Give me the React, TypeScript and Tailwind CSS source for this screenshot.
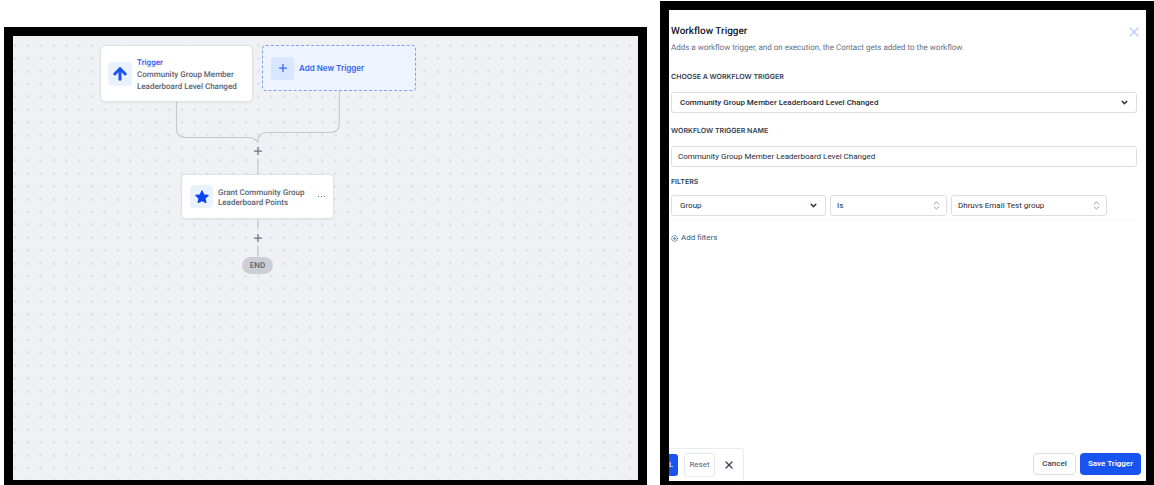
import { ArrowUp, ChevronDown, ChevronsUpDown, CirclePlus, Plus, X } from "lucide-react";
import type { ReactNode } from "react";

const FIELD =
  "block h-[21px] w-full appearance-none rounded-[3px] border border-[#dcdee3] bg-white text-[8px] text-[#1f2937] outline-none";

const SectionLabel = ({ children, htmlFor }: { children: ReactNode; htmlFor?: string }) => (
  <label htmlFor={htmlFor} className="block font-['Inter',sans-serif] text-[7px] leading-[10px] font-semibold text-[#344054]">
    {children}
  </label>
);

type SelectProps = { id?: string; label?: string; value: string; className: string; sort?: boolean };

const Select = ({ id, label, value, className, sort }: SelectProps) => (
  <div className="relative">
    <select id={id} aria-label={label} defaultValue={value} className={`${FIELD} ${className}`}>
      <option>{value}</option>
    </select>
    {sort ? (
      <ChevronsUpDown className="pointer-events-none absolute top-[5px] right-[5px] size-[11px] text-[#8b919c]" strokeWidth={2} />
    ) : (
      <ChevronDown className="pointer-events-none absolute top-[6px] right-[8px] size-[9px] text-[#344054]" strokeWidth={4} />
    )}
  </div>
);

const Connectors = () => (
  <svg className="absolute inset-0 size-full" aria-hidden="true">
    <defs>
      <pattern id="dots" x="-4.1" y="3.2" width="12.8" height="12.8" patternUnits="userSpaceOnUse">
        <circle cx="6.4" cy="6.4" r="1.4" fill="#e0e0e3" />
      </pattern>
    </defs>
    <rect width="100%" height="100%" fill="url(#dots)" />
    <g fill="none" stroke="#c6c8cc" strokeWidth="1.2">
      <path d="M163.5 65V92.5Q163.5 101.5 172.5 101.5H235Q242 101.5 244.8 106.5" />
      <path d="M326.3 55V87.5Q326.3 96.5 317.3 96.5H254Q244.8 96.5 244.8 106.5" />
      <path d="M244.8 122.5V138M244.8 183V193.5M244.8 209.5V221" />
    </g>
  </svg>
);

const AddStep = ({ className }: { className: string }) => (
  <button aria-label="Add step" className={`absolute left-[239px] flex size-[12px] items-center justify-center text-[#667085] ${className}`}>
    <Plus className="size-[12px]" strokeWidth={2.5} />
  </button>
);

const WorkflowCanvas = () => (
  <section className="relative mt-[27px] overflow-hidden border-[9px] border-b-[5px] border-black bg-[#f0f1f5]">
    <Connectors />

    <div className="absolute top-[9px] left-[87px] flex h-[57px] w-[153px] items-center gap-[5px] rounded-[5px] border border-[#dfe1e5] bg-white pl-[7px] shadow-xs">
      <span className="flex size-[24px] shrink-0 items-center justify-center rounded-[4px] bg-[#eaf1ff]">
        <ArrowUp className="size-[18px] text-[#1a54f0]" strokeWidth={4} />
      </span>
      <div className="pt-[2px] text-[8px] leading-[12px] font-medium whitespace-nowrap text-[#596273]">
        <div className="font-semibold text-[#3563f5]">Trigger</div>
        <div>Community Group Member</div>
        <div>Leaderboard Level Changed</div>
      </div>
    </div>

    <button className="absolute top-[9px] left-[249px] flex h-[46px] w-[154px] items-center gap-[5px] rounded-[4px] border border-dashed border-[#7ea0fa] bg-[#edf3ff] pl-[8px] font-['Inter',sans-serif] text-[8px] font-semibold whitespace-nowrap text-[#3563f5]">
      <span className="flex size-[23px] shrink-0 items-center justify-center rounded-[3px] bg-[#d8e6ff]">
        <Plus className="size-[12px]" strokeWidth={2.5} />
      </span>
      Add New Trigger
    </button>

    <AddStep className="top-[109px]" />

    <div className="absolute top-[138px] left-[168px] flex h-[45px] w-[153px] items-center gap-[5px] rounded-[4px] border border-[#dfe1e5] bg-white px-[8px] shadow-xs">
      <span className="flex size-[23px] shrink-0 items-center justify-center rounded-[4px] bg-[#eaf1ff]">
        <svg viewBox="0 0 24 24" className="size-[16px] text-[#0b46f0]" fill="currentColor" stroke="currentColor" strokeWidth="2" strokeLinejoin="round">
          <path d="M12 3l2.7 5.9 6.3.7-4.7 4.3 1.4 6.4L12 17l-5.7 3.3 1.4-6.4L3 9.6l6.3-.7z" />
        </svg>
      </span>
      <div className="flex-1 pt-[2px] text-[8px] leading-[10px] font-medium whitespace-nowrap text-[#596273]">
        <div>Grant Community Group</div>
        <div>Leaderboard Points</div>
      </div>
      <button aria-label="Step options" className="flex gap-[2px]">
        <i className="size-[1px] bg-[#667085]" />
        <i className="size-[1px] bg-[#667085]" />
        <i className="size-[1px] bg-[#667085]" />
      </button>
    </div>

    <AddStep className="top-[196px]" />

    <div className="absolute top-[221px] left-[229px] flex h-[17px] w-[31px] items-center justify-center rounded-full bg-[#cbcfd5] text-[8px] font-medium text-[#596273]">
      END
    </div>
  </section>
);

const TriggerPanel = () => (
  <section className="mt-px flex flex-col border-t-[9px] border-r-[8px] border-b-[4px] border-l-[9px] border-black bg-white">
    <div className="pt-[15px] pr-[9px] pl-[2px]">
      <header className="-mr-[5px] flex h-[14px] items-center justify-between">
        <h1 className="text-[10px] leading-[16px] font-medium text-[#101828]">Workflow Trigger</h1>
        <button aria-label="Close" className="text-[#b9cdfd]">
          <X className="size-[16px]" strokeWidth={2} />
        </button>
      </header>
      <p className="mt-[3px] text-[8px] leading-[12px] text-[#667085]">
        Adds a workflow trigger, and on execution, the Contact gets added to the workflow.
      </p>

      <div className="mt-[18px]">
        <SectionLabel htmlFor="trigger">CHOOSE A WORKFLOW TRIGGER</SectionLabel>
        <div className="mt-[10px]">
          <Select id="trigger" value="Community Group Member Leaderboard Level Changed" className="pl-[8px] font-medium" />
        </div>
      </div>

      <div className="mt-[13px]">
        <SectionLabel htmlFor="name">WORKFLOW TRIGGER NAME</SectionLabel>
        <input
          id="name"
          defaultValue="Community Group Member Leaderboard Level Changed"
          className={`${FIELD} mt-[10px] pl-[6px]`}
        />
      </div>

      <div className="mt-[10px]">
        <SectionLabel htmlFor="filter-field">FILTERS</SectionLabel>
        <div className="mt-[8px] grid grid-cols-[155fr_117fr_156fr] gap-[4px] border-b border-[#f5f6f7] pr-[30px] pb-[4px]">
          <Select id="filter-field" value="Group" className="pl-[8px]" />
          <Select label="Operator" value="Is" className="pl-[6px]" sort />
          <Select label="Group value" value="Dhruvs Email Test group" className="pl-[6px]" sort />
        </div>
      </div>

      <button className="mt-[11px] flex items-center gap-[3px] text-[8px] leading-[12px] text-[#2c5b80]">
        <CirclePlus className="size-[7px]" strokeWidth={2} />
        Add filters
      </button>
    </div>

    <footer className="mt-auto flex items-end justify-between pr-[5px]">
      <div className="flex h-[33px] w-[75px] items-center rounded-tr-[3px] border-t border-r border-[#eaecf0] text-[8px]">
        <button className="flex h-[22px] w-[9px] items-center overflow-hidden rounded-r-[3px] bg-[#1a54f0] text-white">L</button>
        <button className="ml-[6px] h-[24px] w-[31px] rounded-[3px] border border-[#e4e7ec] text-[#596273]">Reset</button>
        <button aria-label="Dismiss" className="ml-[8px] text-[#344054]">
          <X className="size-[12px]" strokeWidth={2.5} />
        </button>
      </div>
      <div className="mb-[6px] flex gap-[4px] text-[8px]">
        <button className="h-[22px] w-[43px] rounded-[4px] border border-[#dcdee6] font-medium text-[#344054]">Cancel</button>
        <button className="h-[22px] w-[61px] rounded-[4px] bg-[#1a54f0] font-semibold whitespace-nowrap text-white">Save Trigger</button>
      </div>
    </footer>
  </section>
);

export default function App() {
  return (
    <main className="grid min-h-screen grid-cols-[643fr_494fr] gap-[13px] bg-white pl-[4px] font-['Roboto',sans-serif] [text-rendering:geometricPrecision]">
      <WorkflowCanvas />
      <TriggerPanel />
    </main>
  );
}
